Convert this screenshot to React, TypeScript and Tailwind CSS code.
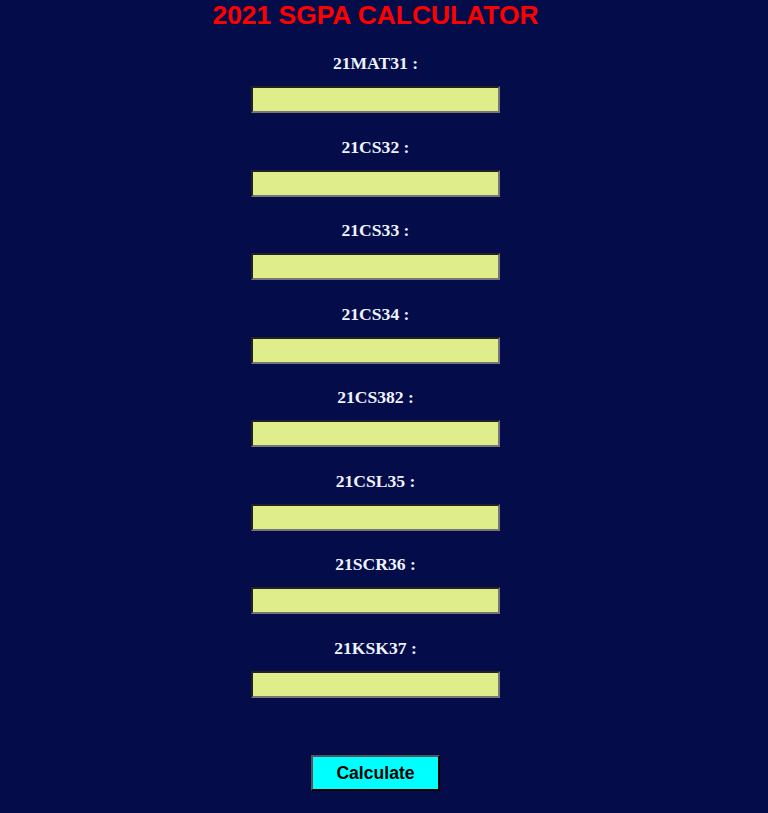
import React from "react";

const SUBJECTS = ["21MAT31", "21CS32", "21CS33", "21CS34", "21CS382", "21CSL35", "21SCR36", "21KSK37"];

export default function App() {
  return (
    <div className="min-h-[813px] w-full bg-[#050c4a]">
      <div className="w-[751px] flex flex-col items-center">
        <h1
          className="m-0 text-[26.4px] leading-[30px] font-bold text-[#ff0000]"
          style={{ fontFamily: "'Liberation Sans', Arial, sans-serif" }}
        >
          2021 SGPA CALCULATOR
        </h1>

        <form className="flex flex-col items-center pt-[23px]" onSubmit={(e) => e.preventDefault()}>
          {SUBJECTS.map((code) => (
            <div key={code} className="flex flex-col items-center mb-[23.5px]">
              <label
                className="text-[17.6px] leading-[20px] font-bold text-[#eef3ff]"
                style={{ fontFamily: "'Liberation Serif', 'Times New Roman', serif" }}
              >
                {code} :
              </label>
              <input
                type="text"
                className="mt-[13px] w-[249px] h-[27px] bg-[#dfee8a] border-2 border-t-[#222222] border-l-[#222222] border-b-[#767676] border-r-[#767676] outline-none"
              />
            </div>
          ))}

          <button
            type="submit"
            className="mt-[34px] w-[129px] h-[36px] bg-[#00ffff] text-black text-[17.6px] font-bold border-2 border-t-[#555555] border-l-[#555555] border-b-black border-r-black"
            style={{ fontFamily: "'Liberation Sans', Arial, sans-serif" }}
          >
            Calculate
          </button>
        </form>
      </div>
    </div>
  );
}
